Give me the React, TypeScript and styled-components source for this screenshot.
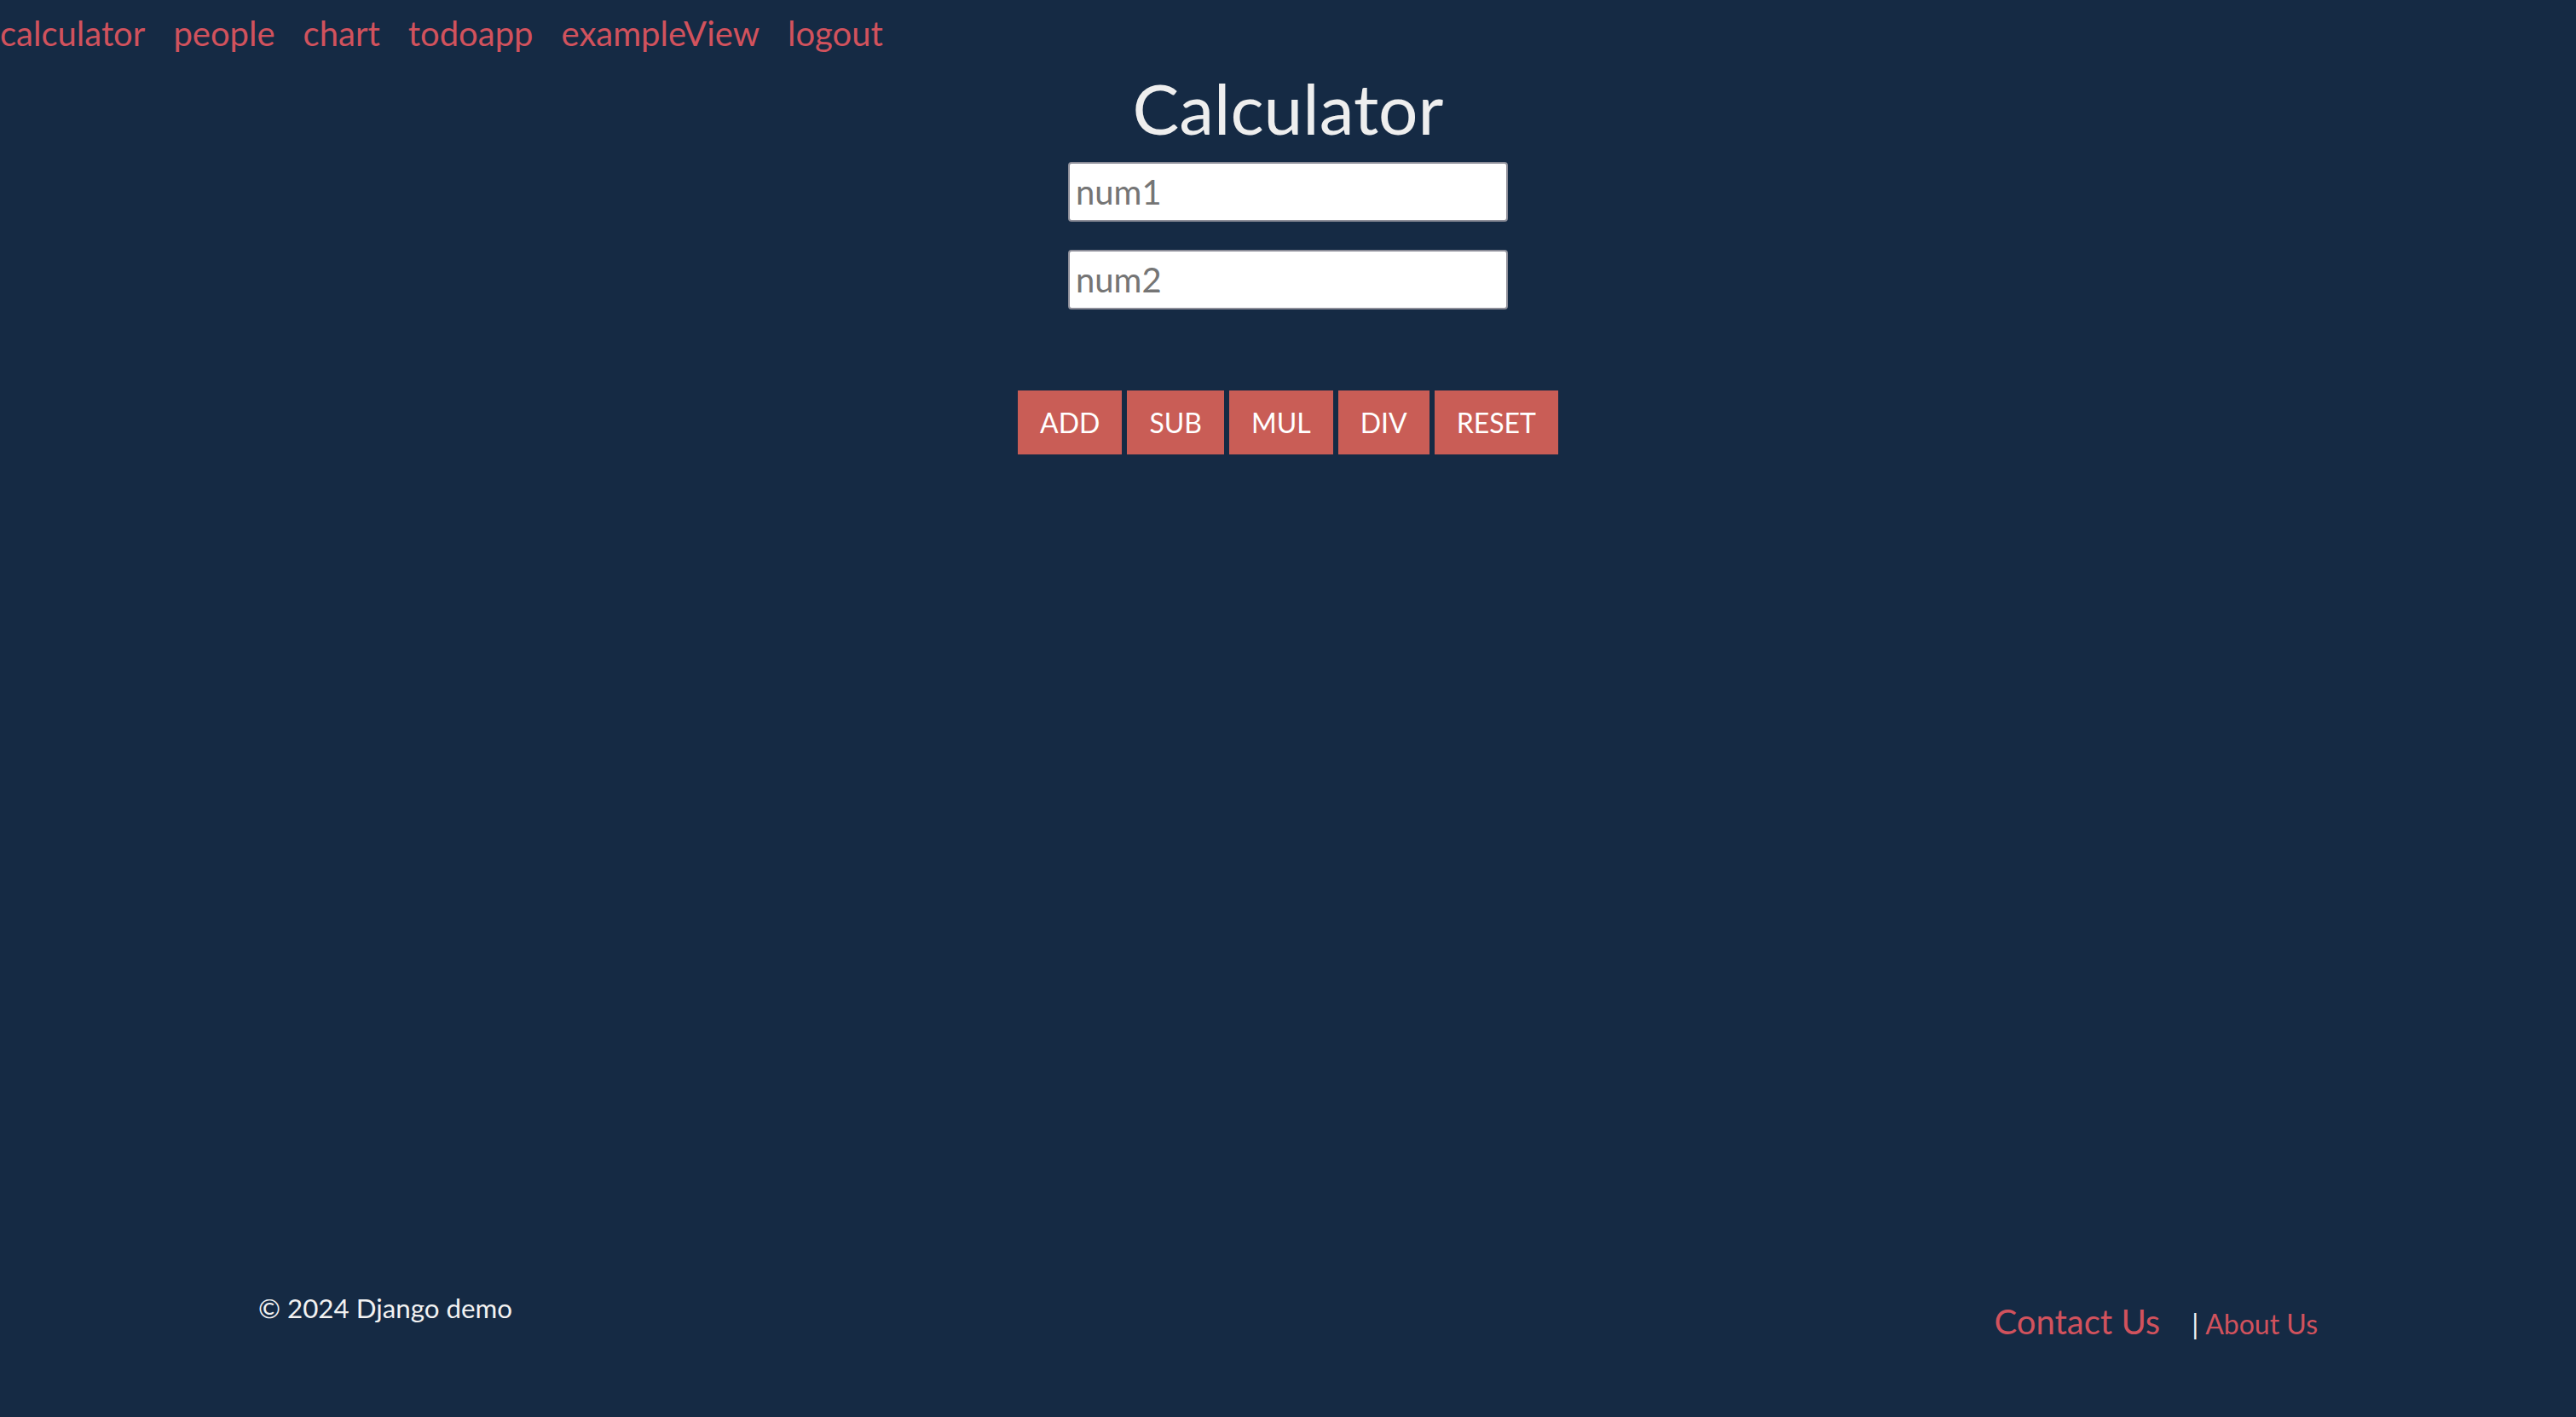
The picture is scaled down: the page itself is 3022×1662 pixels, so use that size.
import React from "react";
import styled, { createGlobalStyle } from "styled-components";

const GlobalStyle = createGlobalStyle`
  html, body {
    margin: 0;
    padding: 0;
    background: #152a44;
  }
  body {
    font-family: Lato, "Open Sans", sans-serif;
  }
  * { box-sizing: border-box; }
`;

const Page = styled.div`
  min-height: 100vh;
  display: flex;
  flex-direction: column;
  background: #152a44;
  font-family: Lato, "Open Sans", sans-serif;
`;

const Nav = styled.nav`
  display: flex;
  gap: 33px;
  padding-top: 15px;
`;

const NavLink = styled.a`
  font-size: 40px;
  line-height: 48px;
  color: #d1525d;
  text-decoration: none;
  cursor: pointer;
`;

const Main = styled.main`
  flex: 1;
  display: flex;
  flex-direction: column;
  align-items: center;
`;

const Title = styled.h1`
  margin: 15px 0 0;
  font-size: 82px;
  line-height: 96px;
  font-weight: 400;
  color: #eeeeee;
`;

const Form = styled.form`
  display: flex;
  flex-direction: column;
  align-items: center;
  gap: 33px;
  margin-top: 16px;
`;

const Input = styled.input`
  width: 516px;
  height: 70px;
  padding: 9px 7px;
  border: 2px solid #8c8d98;
  border-radius: 4px;
  background: #ffffff;
  font-family: Lato, "Open Sans", sans-serif;
  font-size: 40px;
  line-height: 48px;
  color: #333;
  outline: none;
  &::placeholder {
    color: #757575;
  }
`;

const ButtonRow = styled.div`
  display: flex;
  gap: 6px;
  margin-top: 95px;
`;

const Button = styled.button`
  height: 75px;
  padding: 0 26px;
  border: none;
  border-radius: 0;
  background: #c95d56;
  color: #ffffff;
  font-family: Lato, "Open Sans", sans-serif;
  font-size: 32px;
  line-height: 38px;
  cursor: pointer;
`;

const Footer = styled.footer`
  width: 2416px;
  margin: 0 auto;
  display: flex;
  justify-content: space-between;
  align-items: flex-start;
  padding-bottom: 88px;
`;

const Copyright = styled.p`
  margin: 0;
  font-size: 31.3px;
  line-height: 38px;
  color: #f2f2f2;
`;

const FooterLinks = styled.div`
  display: flex;
  align-items: baseline;
  padding-top: 11px;
`;

const ContactLink = styled.a`
  font-size: 40px;
  line-height: 48px;
  color: #d1525d;
  text-decoration: none;
  margin-right: 37px;
`;

const Separator = styled.span`
  font-size: 32px;
  color: #f2f2f2;
  margin-right: 8px;
`;

const AboutLink = styled.a`
  font-size: 32px;
  color: #d1525d;
  text-decoration: none;
`;

const navItems = ["calculator", "people", "chart", "todoapp", "exampleView", "logout"];
const ops = ["ADD", "SUB", "MUL", "DIV", "RESET"];

export default function App() {
  return (
    <>
      <GlobalStyle />
      <Page>
        <Nav>
          {navItems.map((n) => (
            <NavLink key={n} href="#">
              {n}
            </NavLink>
          ))}
        </Nav>
        <Main>
          <Title>Calculator</Title>
          <Form onSubmit={(e) => e.preventDefault()}>
            <Input type="text" placeholder="num1" />
            <Input type="text" placeholder="num2" />
          </Form>
          <ButtonRow>
            {ops.map((o) => (
              <Button key={o} type="button">
                {o}
              </Button>
            ))}
          </ButtonRow>
        </Main>
        <Footer>
          <Copyright>© 2024 Django demo</Copyright>
          <FooterLinks>
            <ContactLink href="#">Contact Us</ContactLink>
            <Separator>|</Separator>
            <AboutLink href="#">About Us</AboutLink>
          </FooterLinks>
        </Footer>
      </Page>
    </>
  );
}
